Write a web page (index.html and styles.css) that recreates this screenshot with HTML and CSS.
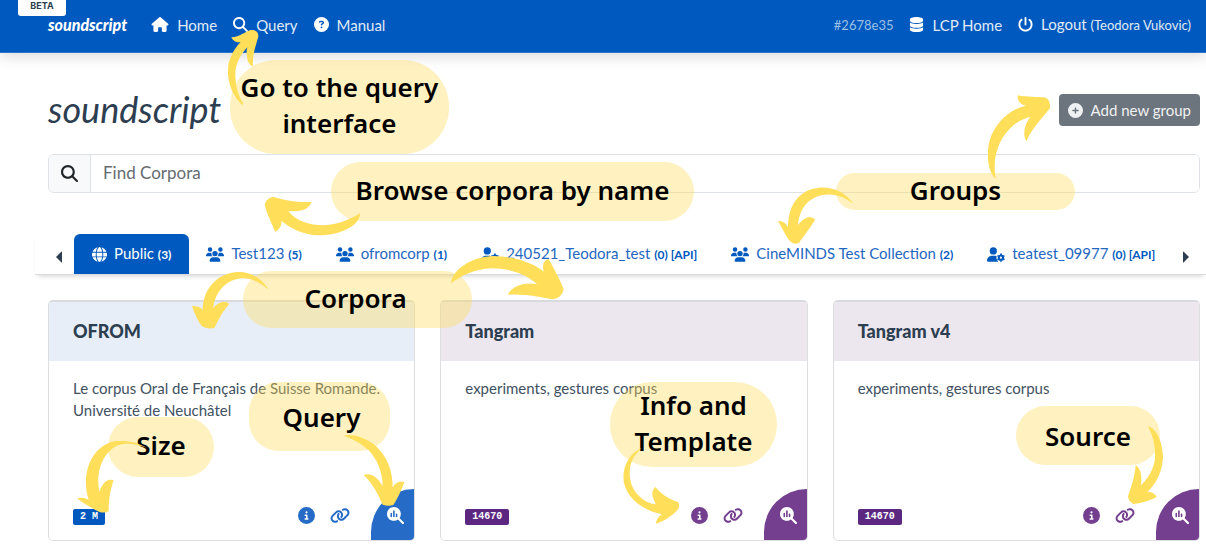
FILE: index.html
```html
<!DOCTYPE html>
<html lang="en">
<head>
<meta charset="utf-8">
<title>soundscript</title>
<link rel="stylesheet" href="styles.css">
</head>
<body>
<svg class="defs" aria-hidden="true">
  <symbol id="house" viewBox="0 0 576 512"><path d="M575.8 255.5c0 18-15 32.1-32 32.1l-32 0 .7 160.2c0 2.7-.2 5.4-.5 8.1l0 16.2c0 22.1-17.9 40-40 40l-16 0c-1.1 0-2.2 0-3.3-.1c-1.4 .1-2.8 .1-4.2 .1L416 512l-24 0c-22.1 0-40-17.9-40-40l0-24 0-64c0-17.7-14.3-32-32-32l-64 0c-17.7 0-32 14.3-32 32l0 64 0 24c0 22.1-17.9 40-40 40l-24 0-31.9 0c-1.5 0-3-.1-4.5-.2c-1.2 .1-2.4 .2-3.6 .2l-16 0c-22.1 0-40-17.9-40-40l0-112c0-.9 0-1.9 .1-2.8l0-69.7-32 0c-18 0-32-14-32-32.1c0-9 3-17 10-24L266.4 8c7-7 15-8 22-8s15 2 21 7L564.8 231.5c8 7 12 15 11 24z"/></symbol>
  <symbol id="search" viewBox="0 0 512 512"><path d="M416 208c0 45.9-14.9 88.3-40 122.7L502.6 457.4c12.5 12.5 12.5 32.8 0 45.3s-32.8 12.5-45.3 0L330.7 376c-34.4 25.2-76.8 40-122.7 40C93.1 416 0 322.9 0 208S93.1 0 208 0S416 93.1 416 208zM208 352a144 144 0 1 0 0-288 144 144 0 1 0 0 288z"/></symbol>
  <symbol id="question" viewBox="0 0 512 512"><path d="M256 512A256 256 0 1 0 256 0a256 256 0 1 0 0 512zM169.8 165.3c7.9-22.3 29.1-37.3 52.8-37.3l58.3 0c34.9 0 63.1 28.3 63.1 63.1c0 22.6-12.1 43.5-31.7 54.8L280 264.4c-.2 13-10.9 23.6-24 23.6c-13.3 0-24-10.7-24-24l0-13.5c0-8.6 4.6-16.5 12.1-20.8l44.3-25.4c4.7-2.7 7.6-7.7 7.6-13.1c0-8.4-6.8-15.1-15.1-15.1l-58.3 0c-3.4 0-6.4 2.1-7.5 5.3l-.4 1.2c-4.4 12.5-18.2 19-30.6 14.6s-19-18.2-14.6-30.6l.4-1.2zM224 352a32 32 0 1 1 64 0 32 32 0 1 1 -64 0z"/></symbol>
  <symbol id="database" viewBox="0 0 448 512"><path d="M448 80l0 48c0 44.2-100.3 80-224 80S0 172.2 0 128L0 80C0 35.8 100.3 0 224 0S448 35.8 448 80zM393.2 214.7c20.8-7.4 39.9-16.9 54.8-28.6L448 288c0 44.2-100.3 80-224 80S0 332.2 0 288L0 186.1c14.9 11.8 34 21.2 54.8 28.6C99.7 230.7 159.5 240 224 240s124.3-9.3 169.2-25.3zM0 346.1c14.9 11.8 34 21.2 54.8 28.6C99.7 390.7 159.5 400 224 400s124.3-9.3 169.2-25.3c20.8-7.4 39.9-16.9 54.8-28.6l0 85.9c0 44.2-100.3 80-224 80S0 476.2 0 432l0-85.9z"/></symbol>
  <symbol id="power" viewBox="0 0 512 512"><path d="M288 32c0-17.7-14.3-32-32-32s-32 14.3-32 32l0 224c0 17.7 14.3 32 32 32s32-14.3 32-32l0-224zM143.5 120.6c13.6-11.3 15.4-31.5 4.1-45.1s-31.5-15.4-45.1-4.1C49.7 115.4 16 181.8 16 256c0 132.5 107.5 240 240 240s240-107.5 240-240c0-74.2-33.8-140.6-86.6-184.6c-13.6-11.3-33.8-9.4-45.1 4.1s-9.4 33.8 4.1 45.1c38.9 32.3 63.5 81 63.5 135.4c0 97.2-78.8 176-176 176s-176-78.8-176-176c0-54.4 24.7-103.1 63.5-135.4z"/></symbol>
  <symbol id="plus" viewBox="0 0 512 512"><path d="M256 512A256 256 0 1 0 256 0a256 256 0 1 0 0 512zM232 344l0-64-64 0c-13.3 0-24-10.7-24-24s10.7-24 24-24l64 0 0-64c0-13.3 10.7-24 24-24s24 10.7 24 24l0 64 64 0c13.3 0 24 10.7 24 24s-10.7 24-24 24l-64 0 0 64c0 13.3-10.7 24-24 24s-24-10.7-24-24z"/></symbol>
  <symbol id="globe" viewBox="0 0 512 512"><path d="M352 256c0 22.2-1.2 43.6-3.3 64l-185.3 0c-2.2-20.4-3.3-41.8-3.3-64s1.2-43.6 3.3-64l185.3 0c2.2 20.4 3.3 41.8 3.3 64zm28.8-64l123.1 0c5.3 20.5 8.1 41.9 8.1 64s-2.8 43.5-8.1 64l-123.1 0c2.1-20.6 3.2-42 3.2-64s-1.1-43.4-3.2-64zm112.6-32l-116.7 0c-10-63.9-29.8-117.4-55.3-151.6c78.3 20.7 142 77.5 171.9 151.6zm-149.1 0l-176.6 0c6.1-36.4 15.5-68.6 27-94.7c10.5-23.6 22.2-40.7 33.5-51.5C239.4 3.2 248.7 0 256 0s16.6 3.2 27.8 13.8c11.3 10.8 23 27.9 33.5 51.5c11.6 26 20.9 58.2 27 94.7zm-209 0L18.6 160C48.6 85.9 112.2 29.1 190.6 8.4C165.1 42.6 145.3 96.1 135.3 160zM8.1 192l123.1 0c-2.1 20.6-3.2 42-3.2 64s1.1 43.4 3.2 64L8.1 320C2.8 299.5 0 278.1 0 256s2.8-43.5 8.1-64zM194.7 446.6c-11.6-26-20.9-58.2-27-94.6l176.6 0c-6.1 36.4-15.5 68.6-27 94.6c-10.5 23.6-22.2 40.7-33.5 51.5C272.6 508.8 263.3 512 256 512s-16.6-3.2-27.8-13.8c-11.3-10.8-23-27.9-33.5-51.5zM135.3 352c10 63.9 29.8 117.4 55.3 151.6C112.2 482.9 48.6 426.1 18.6 352l116.7 0zm358.1 0c-30 74.1-93.6 130.9-171.9 151.6c25.5-34.2 45.2-87.7 55.3-151.6l116.7 0z"/></symbol>
  <symbol id="users" viewBox="0 0 640 512"><path d="M144 0a80 80 0 1 1 0 160A80 80 0 1 1 144 0zM512 0a80 80 0 1 1 0 160A80 80 0 1 1 512 0zM0 298.7C0 239.8 47.8 192 106.7 192l42.7 0c15.9 0 31 3.5 44.6 9.7c-1.3 7.2-1.9 14.7-1.9 22.3c0 38.2 16.8 72.5 43.3 96c-.2 0-.4 0-.7 0L21.3 320C9.6 320 0 310.4 0 298.7zM405.3 320c-.2 0-.4 0-.7 0c26.6-23.5 43.3-57.8 43.3-96c0-7.6-.7-15-1.9-22.3c13.6-6.3 28.7-9.7 44.6-9.7l42.7 0C592.2 192 640 239.8 640 298.7c0 11.8-9.6 21.3-21.3 21.3l-213.3 0zM224 224a96 96 0 1 1 192 0 96 96 0 1 1 -192 0zM128 485.3C128 411.7 187.7 352 261.3 352l117.3 0C452.3 352 512 411.7 512 485.3c0 14.7-11.9 26.7-26.7 26.7l-330.7 0c-14.7 0-26.7-11.9-26.7-26.7z"/></symbol>
  <symbol id="user-gear" viewBox="0 0 640 512"><circle cx="224" cy="128" r="128"/><path d="M178 304h92c27 0 53 6 76 17-22 48-12 122 50 183q-10 8-22 8H30c-17 0-30-13-30-30 0-98 80-178 178-178z"/><circle cx="496" cy="368" r="76" fill="none" stroke="currentColor" stroke-width="72"/><path d="M496 224v52M496 460v52M371 296l45 26M576 414l45 26M371 440l45-26M576 322l45-26" stroke="currentColor" stroke-width="60"/></symbol>
  <symbol id="link" viewBox="0 0 640 512"><path d="M579.8 267.7c56.5-56.5 56.5-148 0-204.5c-50-50-128.8-56.5-186.3-15.4l-1.6 1.1c-14.4 10.3-17.7 30.3-7.4 44.6s30.3 17.7 44.6 7.4l1.6-1.1c32.1-22.9 76-19.3 103.8 8.6c31.5 31.5 31.5 82.5 0 114L422.3 334.8c-31.5 31.5-82.5 31.5-114 0c-27.9-27.9-31.5-71.8-8.6-103.8l1.1-1.6c10.3-14.4 6.9-34.4-7.4-44.6s-34.4-6.9-44.6 7.4l-1.1 1.6C206.5 251.2 213 330 263 380c56.5 56.5 148 56.5 204.5 0L579.8 267.7zM60.2 244.3c-56.5 56.5-56.5 148 0 204.5c50 50 128.8 56.5 186.3 15.4l1.6-1.1c14.4-10.3 17.7-30.3 7.4-44.6s-30.3-17.7-44.6-7.4l-1.6 1.1c-32.1 22.9-76 19.3-103.8-8.6C74 372 74 321 105.5 289.5L217.7 177.2c31.5-31.5 82.5-31.5 114 0c27.9 27.9 31.5 71.8 8.6 103.9l-1.1 1.6c-10.3 14.4-6.9 34.4 7.4 44.6s34.4 6.9 44.6-7.4l1.1-1.6C433.5 260.8 427 182 377 132c-56.5-56.5-148-56.5-204.5 0L60.2 244.3z"/></symbol>
  <symbol id="info" viewBox="0 0 512 512"><path d="M256 512A256 256 0 1 0 256 0a256 256 0 1 0 0 512zM216 336l24 0 0-64-24 0c-13.3 0-24-10.7-24-24s10.7-24 24-24l48 0c13.3 0 24 10.7 24 24l0 88 8 0c13.3 0 24 10.7 24 24s-10.7 24-24 24l-80 0c-13.3 0-24-10.7-24-24s10.7-24 24-24zm40-208a32 32 0 1 1 0 64 32 32 0 1 1 0-64z"/></symbol>
  <symbol id="chart" viewBox="0 0 512 512"><path fill-rule="evenodd" d="M416 208c0 46-15 88-40 123l127 126c12 13 12 33 0 46s-33 12-46 0L331 376c-35 25-77 40-123 40C93 416 0 323 0 208S93 0 208 0s208 93 208 208zM104 200v88a24 24 0 0 0 48 0v-88a24 24 0 0 0-48 0zM184 120v168a24 24 0 0 0 48 0V120a24 24 0 0 0-48 0zM264 216v72a24 24 0 0 0 48 0v-72a24 24 0 0 0-48 0z"/></symbol>
  <symbol id="caret-left" viewBox="0 0 6 12"><path d="M6 1v10q0 1-1 0L0 6l5-5q1-1 1 0z"/></symbol>
  <symbol id="caret-right" viewBox="0 0 6 12"><path d="M0 1v10q0 1 1 0l5-5-5-5q-1-1-1 0z"/></symbol>
</svg>

<header class="topbar">
  <span class="beta">BETA</span>
  <a class="brand" href="#">soundscript</a>
  <nav class="menu">
    <a href="#"><svg class="icon wide"><use href="#house"/></svg>Home</a>
    <a href="#"><svg class="icon"><use href="#search"/></svg>Query</a>
    <a href="#"><svg class="icon"><use href="#question"/></svg>Manual</a>
  </nav>
  <nav class="menu account">
    <span class="version">#2678e35</span>
    <a href="#"><svg class="icon"><use href="#database"/></svg>LCP Home</a>
    <a href="#"><svg class="icon"><use href="#power"/></svg><span>Logout <small>(Teodora Vukovic)</small></span></a>
  </nav>
</header>

<main class="page">
  <div class="title-row">
    <h1>soundscript</h1>
    <button class="add" type="button"><svg class="icon"><use href="#plus"/></svg>Add new group</button>
  </div>
  <div class="search">
    <label for="find" aria-label="Find Corpora"><svg class="icon big"><use href="#search"/></svg></label>
    <input id="find" type="text" placeholder="Find Corpora">
  </div>

  <div class="tabs">
    <button class="scroll" type="button" aria-label="Previous"><svg><use href="#caret-left"/></svg></button>
    <nav class="tab-list">
      <a class="tab active" href="#"><svg class="icon"><use href="#globe"/></svg><span>Public <b>(3)</b></span></a>
      <a class="tab" href="#"><svg class="icon wide"><use href="#users"/></svg><span>Test123 <b>(5)</b></span></a>
      <a class="tab" href="#"><svg class="icon wide"><use href="#users"/></svg><span>ofromcorp <b>(1)</b></span></a>
      <a class="tab" href="#"><svg class="icon wide"><use href="#user-gear"/></svg><span>240521_Teodora_test <b>(0) [API]</b></span></a>
      <a class="tab" href="#"><svg class="icon wide"><use href="#users"/></svg><span>CineMINDS Test Collection <b>(2)</b></span></a>
      <a class="tab" href="#"><svg class="icon wide"><use href="#user-gear"/></svg><span>teatest_09977 <b>(0) [API]</b></span></a>
    </nav>
    <button class="scroll" type="button" aria-label="Next"><svg><use href="#caret-right"/></svg></button>
  </div>

  <section class="cards">
    <article class="card blue">
      <h2>OFROM</h2>
      <p>Le corpus Oral de Français de Suisse Romande. Université de Neuchâtel</p>
      <footer>
        <span class="size">2 M</span>
        <a href="#" aria-label="Info"><svg class="icon"><use href="#info"/></svg></a>
        <a href="#" aria-label="Source"><svg class="icon wide"><use href="#link"/></svg></a>
        <a class="corner" href="#" aria-label="Query"><svg class="icon"><use href="#chart"/></svg></a>
      </footer>
    </article>
    <article class="card purple">
      <h2>Tangram</h2>
      <p>experiments, gestures corpus</p>
      <footer>
        <span class="size">14670</span>
        <a href="#" aria-label="Info"><svg class="icon"><use href="#info"/></svg></a>
        <a href="#" aria-label="Source"><svg class="icon wide"><use href="#link"/></svg></a>
        <a class="corner" href="#" aria-label="Query"><svg class="icon"><use href="#chart"/></svg></a>
      </footer>
    </article>
    <article class="card purple">
      <h2>Tangram v4</h2>
      <p>experiments, gestures corpus</p>
      <footer>
        <span class="size">14670</span>
        <a href="#" aria-label="Info"><svg class="icon"><use href="#info"/></svg></a>
        <a href="#" aria-label="Source"><svg class="icon wide"><use href="#link"/></svg></a>
        <a class="corner" href="#" aria-label="Query"><svg class="icon"><use href="#chart"/></svg></a>
      </footer>
    </article>
  </section>
</main>

<div class="notes">
  <div class="note n-query-ui">Go to the query<br>interface</div>
  <div class="note n-browse">Browse corpora by name</div>
  <div class="note n-groups">Groups</div>
  <div class="note n-corpora">Corpora</div>
  <div class="note n-size">Size</div>
  <div class="note n-query">Query</div>
  <div class="note n-info">Info and<br>Template</div>
  <div class="note n-source">Source</div>
  <svg class="arrows" viewBox="0 0 3618 1647" aria-hidden="true">
    <path d="M728 316C690 280 678 230 686 190C694 160 708 140 722 126C710 130 698 122 694 112C720 110 735 95 752 90Q776 88 775 110C768 135 756 165 759 200C746 195 739 180 740 150L742 142C720 165 705 195 706 225C707 260 715 290 730 310Z"/>
    <path transform="translate(2412 0)" d="M575 537C550 510 550 470 553 440C562 380 610 330 665 317C650 312 640 305 641 286C670 292 700 290 725 293Q740 300 738 325C710 360 680 390 668 424C655 405 660 375 679 350C620 365 580 420 573 480C571 500 572 520 575 537Z"/>
    <path transform="scale(3)" d="M854 204C842 188 825 185 812 189C796 194 788 208 788 227C785 222 782 221 778 221C783 230 787 238 790 241Q793 245 799 243C803 237 810 228 815 220C812 215 804 217 798 225C799 213 804 202 816 197C832 191 844 197 854 204Z"/>
    <path transform="translate(720 450)" d="M360 190C362 225 300 258 235 256C190 254 150 235 124 212C126 225 120 235 106 246C95 220 80 190 74 165Q75 148 98 140C130 150 170 158 215 156C205 178 190 185 145 184C170 215 210 225 250 226C300 224 335 205 360 190Z"/>
    <path transform="translate(0 660)" d="M804 205C780 172 750 155 715 156C650 158 608 210 608 270C600 260 590 258 576 258C585 285 595 305 605 318Q620 328 643 324C655 300 670 270 688 252C675 240 658 243 640 264C645 215 680 178 725 175C755 173 785 190 804 208Z"/>
    <path transform="translate(1206 660)" d="M147 190C150 150 210 108 275 108C340 110 395 130 425 155C420 135 425 120 440 117C455 145 475 180 485 208Q480 232 455 238C415 232 370 220 317 224C330 200 360 185 405 192C370 160 320 145 270 145C220 147 180 165 147 190Z"/>
    <path transform="translate(0 1125)" d="M440 218C410 200 380 197 350 198C290 205 255 265 258 330C258 345 262 360 266 374C255 368 245 366 231 370C250 385 275 400 297 410Q315 416 326 408C326 370 332 340 341 316C325 310 310 318 298 350C288 300 300 240 350 212C380 200 410 208 440 218Z"/>
    <path transform="translate(1080 1125)" d="M-50 182C-20 175 20 190 50 215C85 250 98 290 98 338C105 322 118 318 133 321C125 345 110 375 100 390Q85 395 68 389C55 360 38 325 11 300C35 292 55 310 68 334C68 290 50 250 25 225C5 205-25 190-50 182Z"/>
    <path transform="translate(1080 1125)" d="M845 218C800 240 785 285 792 325C805 375 850 405 905 418C895 425 888 435 888 446C915 438 940 420 955 402Q960 390 955 382C930 372 905 360 886 336C872 350 875 365 888 388C850 385 815 350 810 310C806 275 815 245 845 218Z"/>
    <path transform="translate(2412 1125)" d="M1032 154C1060 160 1078 210 1077 250C1073 300 1050 335 1030 350C1045 350 1055 358 1058 366C1035 378 1010 386 988 387Q972 378 972 364C982 335 992 305 995 270C1010 280 1015 305 1011 330C1040 305 1055 265 1053 240C1053 205 1045 180 1032 154Z"/>
  </svg>
</div>
</body>
</html>
```
FILE: styles.css
```css
* { box-sizing: border-box; }
body {
  margin: 0;
  position: relative;
  font: 15px/22px Lato, "Liberation Sans", sans-serif;
  color: #2c3e50;
  background: #fff;
}
a { color: inherit; text-decoration: none; }
button { font: inherit; cursor: pointer; }
.defs { position: absolute; width: 0; height: 0; }
.icon { width: 15px; height: 15px; fill: currentColor; flex: none; }
.icon.wide { width: 18px; }
.icon.big { width: 17px; height: 17px; }

.topbar {
  position: relative;
  display: flex;
  align-items: center;
  gap: 24px;
  height: 53px;
  padding: 0 15px 3px 48px;
  background: #0059be;
  border-bottom: 1px solid #2a74c9;
  box-shadow: 0 3px 14px rgba(0, 0, 0, .15);
  color: #e0ebf7;
}
.beta {
  position: absolute;
  left: 18px;
  top: 0;
  width: 48px;
  height: 16px;
  border-radius: 0 0 3px 3px;
  background: #fff;
  color: #2c3e50;
  font: bold 9px/12px Inter, sans-serif;
  text-align: center;
}
.brand { color: #fff; font-size: 16px; font-weight: 900; font-style: italic; }
.menu { display: flex; align-items: center; gap: 16px; }
.menu a { display: flex; align-items: center; gap: 8px; }
.menu .icon { color: #fff; }
.menu small { font-size: 13px; }
.account { margin-left: auto; }
.version { color: #9cc0e7; font-size: 13px; }

.page { padding: 41px 6px 8px 48px; }
.title-row { display: flex; justify-content: space-between; align-items: flex-start; height: 60px; }
h1 { margin: 0; font-size: 36px; line-height: 30px; font-weight: 400; font-style: italic; }
.add {
  display: flex;
  align-items: center;
  gap: 8px;
  height: 32px;
  padding: 0 9px;
  border: 0;
  border-radius: 4px;
  background: #6c757d;
  color: #f0f1f2;
}
.search { display: flex; height: 39px; border: 1px solid #dee2e6; border-radius: 6px; overflow: hidden; }
.search label {
  display: flex;
  align-items: center;
  justify-content: center;
  width: 42px;
  background: #f8f9fa;
  border-right: 1px solid #dee2e6;
  color: #212529;
}
.search input { flex: 1; min-width: 0; border: 0; padding: 0 12px 2px; font: inherit; font-size: 17px; background: #fff; }
.search input::placeholder { color: #666b70; opacity: 1; }

.tabs {
  display: flex;
  margin: 41px -6px 0 -13px;
  border-bottom: 1px solid #d9dcdf;
  box-shadow: 0 4px 5px -3px rgba(0, 0, 0, .18);
  height: 41px;
}
.scroll {
  display: flex;
  align-items: center;
  justify-content: center;
  width: 35px;
  flex: none;
  border: 0;
  background: none;
  padding: 6px 0 0;
  color: #2c3e50;
}
.scroll svg { width: 6px; height: 12px; fill: currentColor; flex: none; }
.scroll:first-child { width: 39px; padding-left: 8px; }
.scroll:last-child { padding-right: 6px; }
.tab-list { flex: 1; display: flex; justify-content: space-between; min-width: 0; }
.tab {
  display: flex;
  align-items: center;
  gap: 7px;
  padding: 0 17px;
  border-radius: 6px 6px 0 0;
  color: #2467c0;
  white-space: nowrap;
}
.tab .icon { color: #0059be; }
.tab b { font-size: 12px; color: #0059be; }
.tab.active, .tab.active b, .tab.active .icon { color: #fff; }
.tab.active { background: #0059be; padding: 0 18px; }

.cards { display: grid; grid-template-columns: repeat(3, 1fr); gap: 25px; margin-top: 25px; }
.card {
  display: flex;
  flex-direction: column;
  min-height: 241px;
  border: 1px solid #dcdee0;
  border-top: 2px solid #d8dade;
  border-radius: 5px;
  overflow: hidden;
}
.blue { --main: #0059be; --soft: #266bc5; --head: #e7eef8; }
.purple { --main: #5b2780; --soft: #733f8e; --head: #ece7ee; }
.card h2 { margin: 0; padding: 18px 24px 19px; font-size: 18px; font-weight: 900; line-height: 22px; background: var(--head); }
.card p { margin: 0; padding: 16px 24px; flex: 1; color: #415161; }
.card footer { display: flex; align-items: center; gap: 15px; height: 51px; padding-left: 24px; color: var(--soft); }
.card footer a { display: flex; padding-top: 2px; }
.size {
  margin: 4px auto 0 0;
  padding: 0 7px;
  border-radius: 2px;
  background: var(--main);
  color: #fff;
  font: bold 10px/16px "Liberation Mono", monospace;
}
.card footer .icon { width: 17px; height: 17px; }
.card footer .icon.wide { width: 20px; }
.card footer .corner {
  width: 43px;
  height: 51px;
  margin-left: 6px;
  padding-left: 6px;
  align-items: center;
  justify-content: center;
  border-radius: 43px 0 0 0;
  background: var(--soft);
  color: #fff;
}

.notes { position: absolute; left: 0; top: 0; width: 1206px; pointer-events: none; }
.note {
  position: absolute;
  display: flex;
  align-items: center;
  justify-content: center;
  padding-bottom: 4px;
  border-radius: 30px;
  background: rgba(255, 222, 89, .38);
  color: #000;
  font: 600 26px/36px "Noto Sans", sans-serif;
  text-align: center;
  white-space: nowrap;
}
.n-query-ui { left: 230px; top: 60px; width: 219px; height: 94px; border-radius: 46px; }
.n-browse { left: 331px; top: 162px; width: 363px; height: 59px; }
.n-groups { left: 836px; top: 173px; width: 239px; height: 37px; }
.n-corpora { left: 243px; top: 271px; width: 229px; height: 57px; padding-right: 4px; }
.n-size { left: 108px; top: 417px; width: 106px; height: 60px; }
.n-query { left: 249px; top: 382px; width: 141px; height: 69px; padding: 0 0 0 4px; }
.n-info { left: 610px; top: 382px; width: 167px; height: 85px; border-radius: 42px; }
.n-source { left: 1016px; top: 406px; width: 144px; height: 59px; padding-bottom: 0; }
.arrows { position: absolute; left: 0; top: 0; width: 1206px; height: 549px; fill: #ffde59; }
```
